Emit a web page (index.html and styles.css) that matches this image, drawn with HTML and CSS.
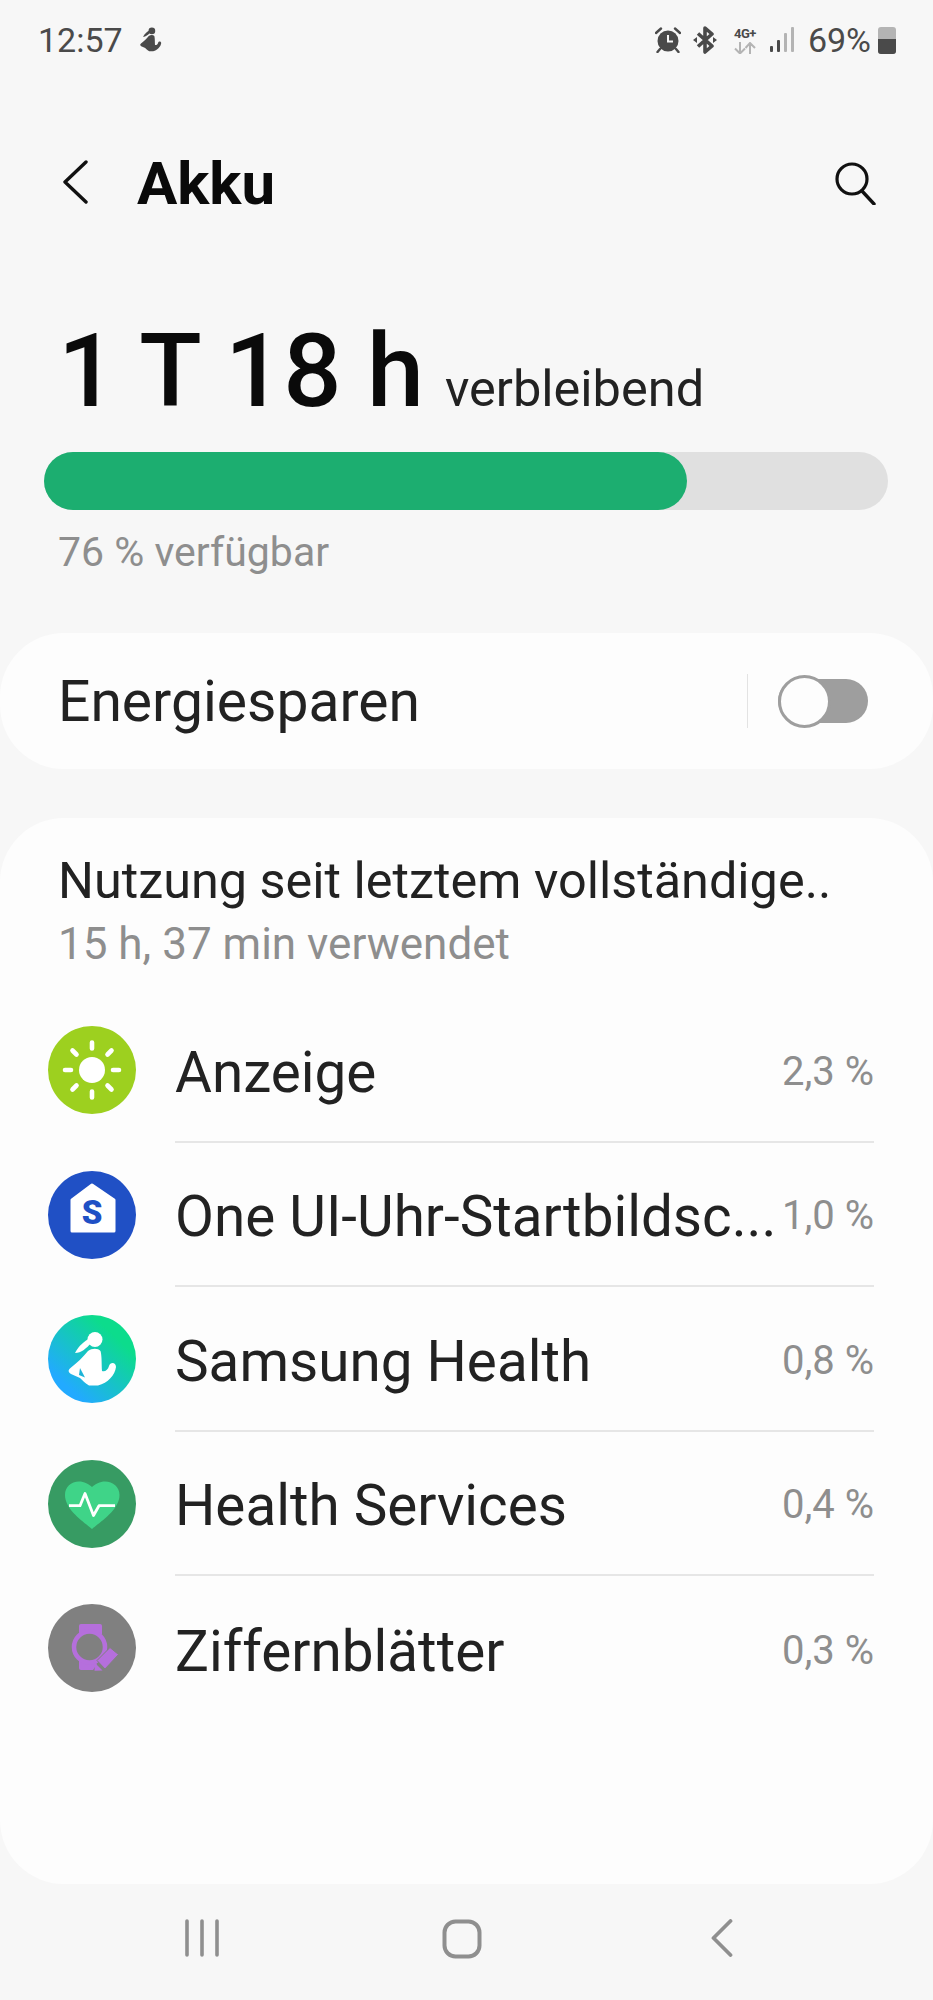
FILE: index.html
```html
<!DOCTYPE html>
<html lang="de">
<head>
    <meta charset="UTF-8">
    <meta name="viewport" content="width=device-width, initial-scale=1.0">
    <title>Akku</title>
    <link rel="stylesheet" href="styles.css">
</head>
<body>
    <!-- Status bar -->
    <div class="status">
        <div class="status-left">
            <span class="clock">12:57</span>
            <svg class="ic-runner" viewBox="18 16 54 58">
                <circle cx="47" cy="24.5" r="7.5"/>
                <path d="M42 23C37 26 31 30 27 38C33 38 39 33 43 28Z"/>
                <path d="M40 36C44 33 50 33 52.5 36C54 41 53.5 50 54 56C57 57 60 55 61 51C62 47 68 47 68 52C67 60 60 68 50 70.5L41 70.5C37 68 35 66 32 63L23 59C20 57 20 55 22.5 53C29 48 35 42 40 36Z"/>
            </svg>
        </div>
        <div class="status-right">
            <svg class="ic-alarm" viewBox="0 0 26 26">
                <circle cx="13" cy="14" r="10.5" fill="#4a4a4a"/>
                <path d="M13 8V14.5H18" fill="none" stroke="#f7f7f7" stroke-width="2"/>
                <path d="M1 6L6 1.5M25 6L20 1.5M5 22L2.5 25M21 22L23.5 25" fill="none" stroke="#4a4a4a" stroke-width="2.4" stroke-linecap="round"/>
            </svg>
            <svg class="ic-bt" viewBox="0 0 24 28">
                <path d="M5 7.5L19 20L12 26V2L19 8L5 20.5" fill="none" stroke="#4a4a4a" stroke-width="3.6" stroke-linejoin="round"/>
                <path d="M0 14L4 11V17ZM24 14L20 11V17Z" fill="#4a4a4a"/>
            </svg>
            <div class="net">
                <span class="net-label">4G+</span>
                <svg class="ic-arrows" viewBox="0 0 28 12">
                    <path d="M9 0V11M4 6.5L9 11.5L14 6.5M19 12V1M14.5 6L19 1L24 6" fill="none" stroke="#b4b4b4" stroke-width="2"/>
                </svg>
            </div>
            <svg class="ic-signal" viewBox="0 0 24 26">
                <rect x="0" y="19" width="3" height="6" rx="1" fill="#4a4a4a"/>
                <rect x="7" y="13" width="3" height="12" rx="1" fill="#4a4a4a"/>
                <rect x="14" y="6" width="3" height="19" rx="1" fill="#b4b4b4"/>
                <rect x="21" y="0" width="3" height="25" rx="1" fill="#b4b4b4"/>
            </svg>
            <span class="level">69%</span>
            <div class="battery"><div class="battery-fill"></div></div>
        </div>
    </div>

    <!-- Title -->
    <div class="appbar">
        <svg class="ic-back" viewBox="0 0 28 44">
            <path d="M25 2L4 22L25 42" fill="none" stroke="#111" stroke-width="3.4" stroke-linecap="round" stroke-linejoin="round"/>
        </svg>
        <h1>Akku</h1>
        <svg class="ic-search" viewBox="0 0 42 44">
            <circle cx="18" cy="18" r="15" fill="none" stroke="#111" stroke-width="3.2"/>
            <path d="M28 30L40 43" stroke="#111" stroke-width="3.4" stroke-linecap="round"/>
        </svg>
    </div>

    <!-- Remaining time -->
    <div class="remain">
        <span class="remain-time">1 T 18 h</span>
        <span class="remain-label">verbleibend</span>
    </div>
    <div class="bar"><div class="bar-fill" style="width: 76.2%"></div></div>
    <div class="available">76 % verfügbar</div>

    <div class="card saver">
        <span class="saver-label">Energiesparen</span>
        <div class="saver-sep"></div>
        <div class="toggle"><div class="toggle-thumb"></div></div>
    </div>

    <!-- Usage list -->
    <div class="card usage">
        <div class="usage-head">
            <div class="usage-title">Nutzung seit letztem vollständige..</div>
            <div class="usage-sub">15 h, 37 min verwendet</div>
        </div>

        <div class="row">
            <svg class="app-icon" viewBox="0 0 88 88">
                <circle cx="44" cy="44" r="44" fill="#9dd01f"/>
                <circle cx="44" cy="44" r="13" fill="#fff"/>
                <path d="M44 16.5V22.5M44 65.5V71.5M17 44H23M65 44H71M24.5 24.5L28.5 28.5M59.5 59.5L63.5 63.5M24.5 63.5L28.5 59.5M59.5 28.5L63.5 24.5" stroke="#fff" stroke-width="4.6" stroke-linecap="round"/>
            </svg>
            <div class="row-body">
                <span class="row-name">Anzeige</span>
                <span class="row-pct">2,3 %</span>
            </div>
        </div>

        <div class="row">
            <svg class="app-icon" viewBox="0 0 88 88">
                <circle cx="44" cy="44" r="44" fill="#2050c5"/>
                <path d="M44 14L66 29V60H24V29Z" fill="#fff" stroke="#fff" stroke-width="3" stroke-linejoin="round"/>
                <text class="house-s" x="44" y="53" text-anchor="middle">S</text>
            </svg>
            <div class="row-body">
                <span class="row-name">One UI-Uhr-Startbildsc...</span>
                <span class="row-pct">1,0 %</span>
            </div>
        </div>

        <div class="row">
            <svg class="app-icon" viewBox="0 0 88 88">
                <defs>
                    <linearGradient id="healthGrad" x1="0.85" y1="0.2" x2="0.25" y2="0.85">
                        <stop offset="0.1" stop-color="#0cdc8c"/>
                        <stop offset="1" stop-color="#22aaff"/>
                    </linearGradient>
                </defs>
                <circle cx="44" cy="44" r="44" fill="url(#healthGrad)"/>
                <g fill="#fff">
                    <circle cx="47" cy="24.5" r="7.5"/>
                    <path d="M42 23C37 26 31 30 27 38C33 38 39 33 43 28Z"/>
                    <path d="M40 36C44 33 50 33 52.5 36C54 41 53.5 50 54 56C57 57 60 55 61 51C62 47 68 47 68 52C67 60 60 68 50 70.5L41 70.5C37 68 35 66 32 63L23 59C20 57 20 55 22.5 53C29 48 35 42 40 36Z"/>
                </g>
                <path d="M32 53L37 62.5L31 60Z" fill="#1cb4d8"/>
            </svg>
            <div class="row-body">
                <span class="row-name">Samsung Health</span>
                <span class="row-pct">0,8 %</span>
            </div>
        </div>

        <div class="row">
            <svg class="app-icon" viewBox="0 0 88 88">
                <circle cx="44" cy="44" r="44" fill="#379b63"/>
                <path d="M44 69C36 62 17 50 17 35C17 27 23 21.5 31 21.5C36 21.5 41 24 44 27C47 24 52 21.5 57 21.5C65 21.5 71.5 27 71.5 35C71.5 50 52 62 44 69Z" fill="#3fd488"/>
                <path d="M21 45.7H32L37 33.5L45.5 55.5L51 45.7H67" fill="none" stroke="#fff" stroke-width="2.8" stroke-linejoin="round"/>
            </svg>
            <div class="row-body">
                <span class="row-name">Health Services</span>
                <span class="row-pct">0,4 %</span>
            </div>
        </div>

        <div class="row row-last">
            <svg class="app-icon" viewBox="0 0 88 88">
                <circle cx="44" cy="44" r="44" fill="#808080"/>
                <g fill="#b56fdc">
                    <path d="M31 22Q31 20 33 20H52Q54 20 54 22V30H31Z"/>
                    <path d="M31 56H46L49 60L45 66H33Q31 66 31 64Z"/>
                </g>
                <circle cx="41.5" cy="43" r="15.5" fill="#808080" stroke="#b56fdc" stroke-width="4.5"/>
                <path d="M62 43.5L70.5 50.5L57 65L49 56.5Z" fill="#b56fdc" stroke="#808080" stroke-width="1"/>
                <path d="M47 59L54.5 66.5L46.5 66.7Z" fill="#b56fdc"/>
            </svg>
            <div class="row-body">
                <span class="row-name">Ziffernblätter</span>
                <span class="row-pct">0,3 %</span>
            </div>
        </div>
    </div>

    <!-- Navigation bar -->
    <div class="nav">
        <div class="nav-slot">
            <svg class="ic-recents" viewBox="0 0 34 38">
                <path d="M2 2V36M17 2V36M32 2V36" stroke="#8f8f8f" stroke-width="3.6" stroke-linecap="round"/>
            </svg>
        </div>
        <div class="nav-slot">
            <svg class="ic-home" viewBox="0 0 40 40">
                <rect x="2.5" y="2.5" width="35" height="35" rx="11" fill="none" stroke="#8f8f8f" stroke-width="4"/>
            </svg>
        </div>
        <div class="nav-slot">
            <svg class="ic-navback" viewBox="0 0 22 38">
                <path d="M19.5 2L2.5 19L19.5 36" fill="none" stroke="#8f8f8f" stroke-width="3.8" stroke-linecap="round" stroke-linejoin="round"/>
            </svg>
        </div>
    </div>
</body>
</html>
```

FILE: styles.css
```css
* {
    margin: 0;
    padding: 0;
    box-sizing: border-box;
}

body {
    width: 933px;
    height: 2000px;
    overflow: hidden;
    background: #f7f7f7;
    font-family: 'Roboto', 'Liberation Sans', sans-serif;
    color: #222;
}

/* Status bar */
.status {
    height: 80px;
    padding: 0 37px 0 38px;
    display: flex;
    align-items: center;
    justify-content: space-between;
    font-size: 34px;
    color: #4a4a4a;
}

.status-left,
.status-right {
    display: flex;
    align-items: center;
}

.ic-runner {
    width: 24px;
    height: 26px;
    margin-left: 16px;
    fill: #4a4a4a;
}

.ic-alarm {
    width: 26px;
    height: 26px;
}

.ic-bt {
    width: 24px;
    height: 28px;
    margin-left: 12px;
}

.net {
    width: 28px;
    margin-left: 14px;
    display: flex;
    flex-direction: column;
    align-items: center;
}

.net-label {
    font-size: 13px;
    line-height: 13px;
    font-weight: 700;
    letter-spacing: -0.5px;
}

.ic-arrows {
    width: 28px;
    height: 12px;
    margin-top: 2px;
}

.ic-signal {
    width: 24px;
    height: 26px;
    margin-left: 11px;
}

.level {
    margin-left: 14px;
}

.battery {
    width: 18px;
    height: 27px;
    margin-left: 7px;
    border-radius: 3px;
    background: #b4b4b4;
    display: flex;
    align-items: flex-end;
}

.battery-fill {
    width: 100%;
    height: 15px;
    background: #4a4a4a;
    border-radius: 0 0 3px 3px;
}

/* Title */
.appbar {
    height: 206px;
    padding: 0 57px 0 61px;
    display: flex;
    align-items: center;
}

.ic-back {
    width: 28px;
    height: 44px;
    margin-bottom: 2px;
}

h1 {
    margin-left: 48px;
    flex: 1;
    font-size: 60px;
    font-weight: 700;
    color: #0a0a0a;
}

.ic-search {
    width: 42px;
    height: 44px;
}

/* Remaining time */
.remain {
    padding: 35px 0 0 58px;
    display: flex;
    align-items: baseline;
    height: 135px;
}

.remain-time {
    font-size: 102.5px;
    line-height: 100px;
    font-weight: 500;
    color: #0a0a0a;
}

.remain-label {
    margin-left: 21px;
    font-size: 50.5px;
    line-height: 60px;
}

.bar {
    height: 58px;
    margin: 31px 45px 0 44px;
    border-radius: 29px;
    background: #e0e0e0;
}

.bar-fill {
    height: 100%;
    border-radius: 29px;
    background: #1cae70;
}

.available {
    margin: 19px 0 0 58px;
    font-size: 41px;
    line-height: 46px;
    color: #8e8e8e;
}

.card {
    background: #fdfdfd;
    border-radius: 64px;
}

.saver {
    height: 136px;
    margin-top: 58px;
    padding: 0 65px 0 58px;
    display: flex;
    align-items: center;
}

.saver-label {
    flex: 1;
    font-size: 57px;
}

.saver-sep {
    width: 1px;
    height: 54px;
    background: #e3e3e3;
}

.toggle {
    width: 90px;
    height: 44px;
    margin-left: 30px;
    border-radius: 22px;
    background: #9e9e9e;
    display: flex;
    align-items: center;
}

.toggle-thumb {
    width: 53px;
    height: 53px;
    border: 3px solid #9e9e9e;
    border-radius: 50%;
    background: #fdfdfd;
}

/* Usage list */
.usage {
    height: 1066px;
    margin-top: 49px;
}

.usage-head {
    height: 180px;
    padding: 34px 0 0 58px;
}

.usage-title {
    font-size: 50.4px;
    line-height: 58px;
}

.usage-sub {
    margin-top: 9px;
    font-size: 44px;
    line-height: 50px;
    color: #8e8e8e;
}

.row {
    height: 144.5px;
    padding: 0 59px 0 48px;
    display: flex;
    align-items: center;
}

.app-icon {
    width: 88px;
    height: 88px;
    flex: none;
}

.row-body {
    height: 100%;
    margin-left: 39px;
    flex: 1;
    display: flex;
    align-items: center;
    justify-content: space-between;
    border-bottom: 2px solid #e6e6e6;
}

.row-last .row-body {
    border-bottom: none;
}

.row-name {
    font-size: 56.6px;
    white-space: nowrap;
    padding-top: 6px;
}

.row-pct {
    font-size: 40px;
    color: #8e8e8e;
    white-space: nowrap;
    padding-top: 4px;
}

.house-s {
    font-family: 'Roboto', sans-serif;
    font-size: 33px;
    font-weight: 900;
    fill: #2050c5;
}

/* Navigation bar */
.nav {
    height: 116px;
    padding: 35px 10px 0 0;
    display: flex;
    justify-content: center;
}

.nav-slot {
    width: 260px;
    display: flex;
    justify-content: center;
}

.ic-recents {
    width: 34px;
    height: 38px;
}

.ic-home {
    width: 40px;
    height: 40px;
}

.ic-navback {
    width: 22px;
    height: 38px;
}
```
